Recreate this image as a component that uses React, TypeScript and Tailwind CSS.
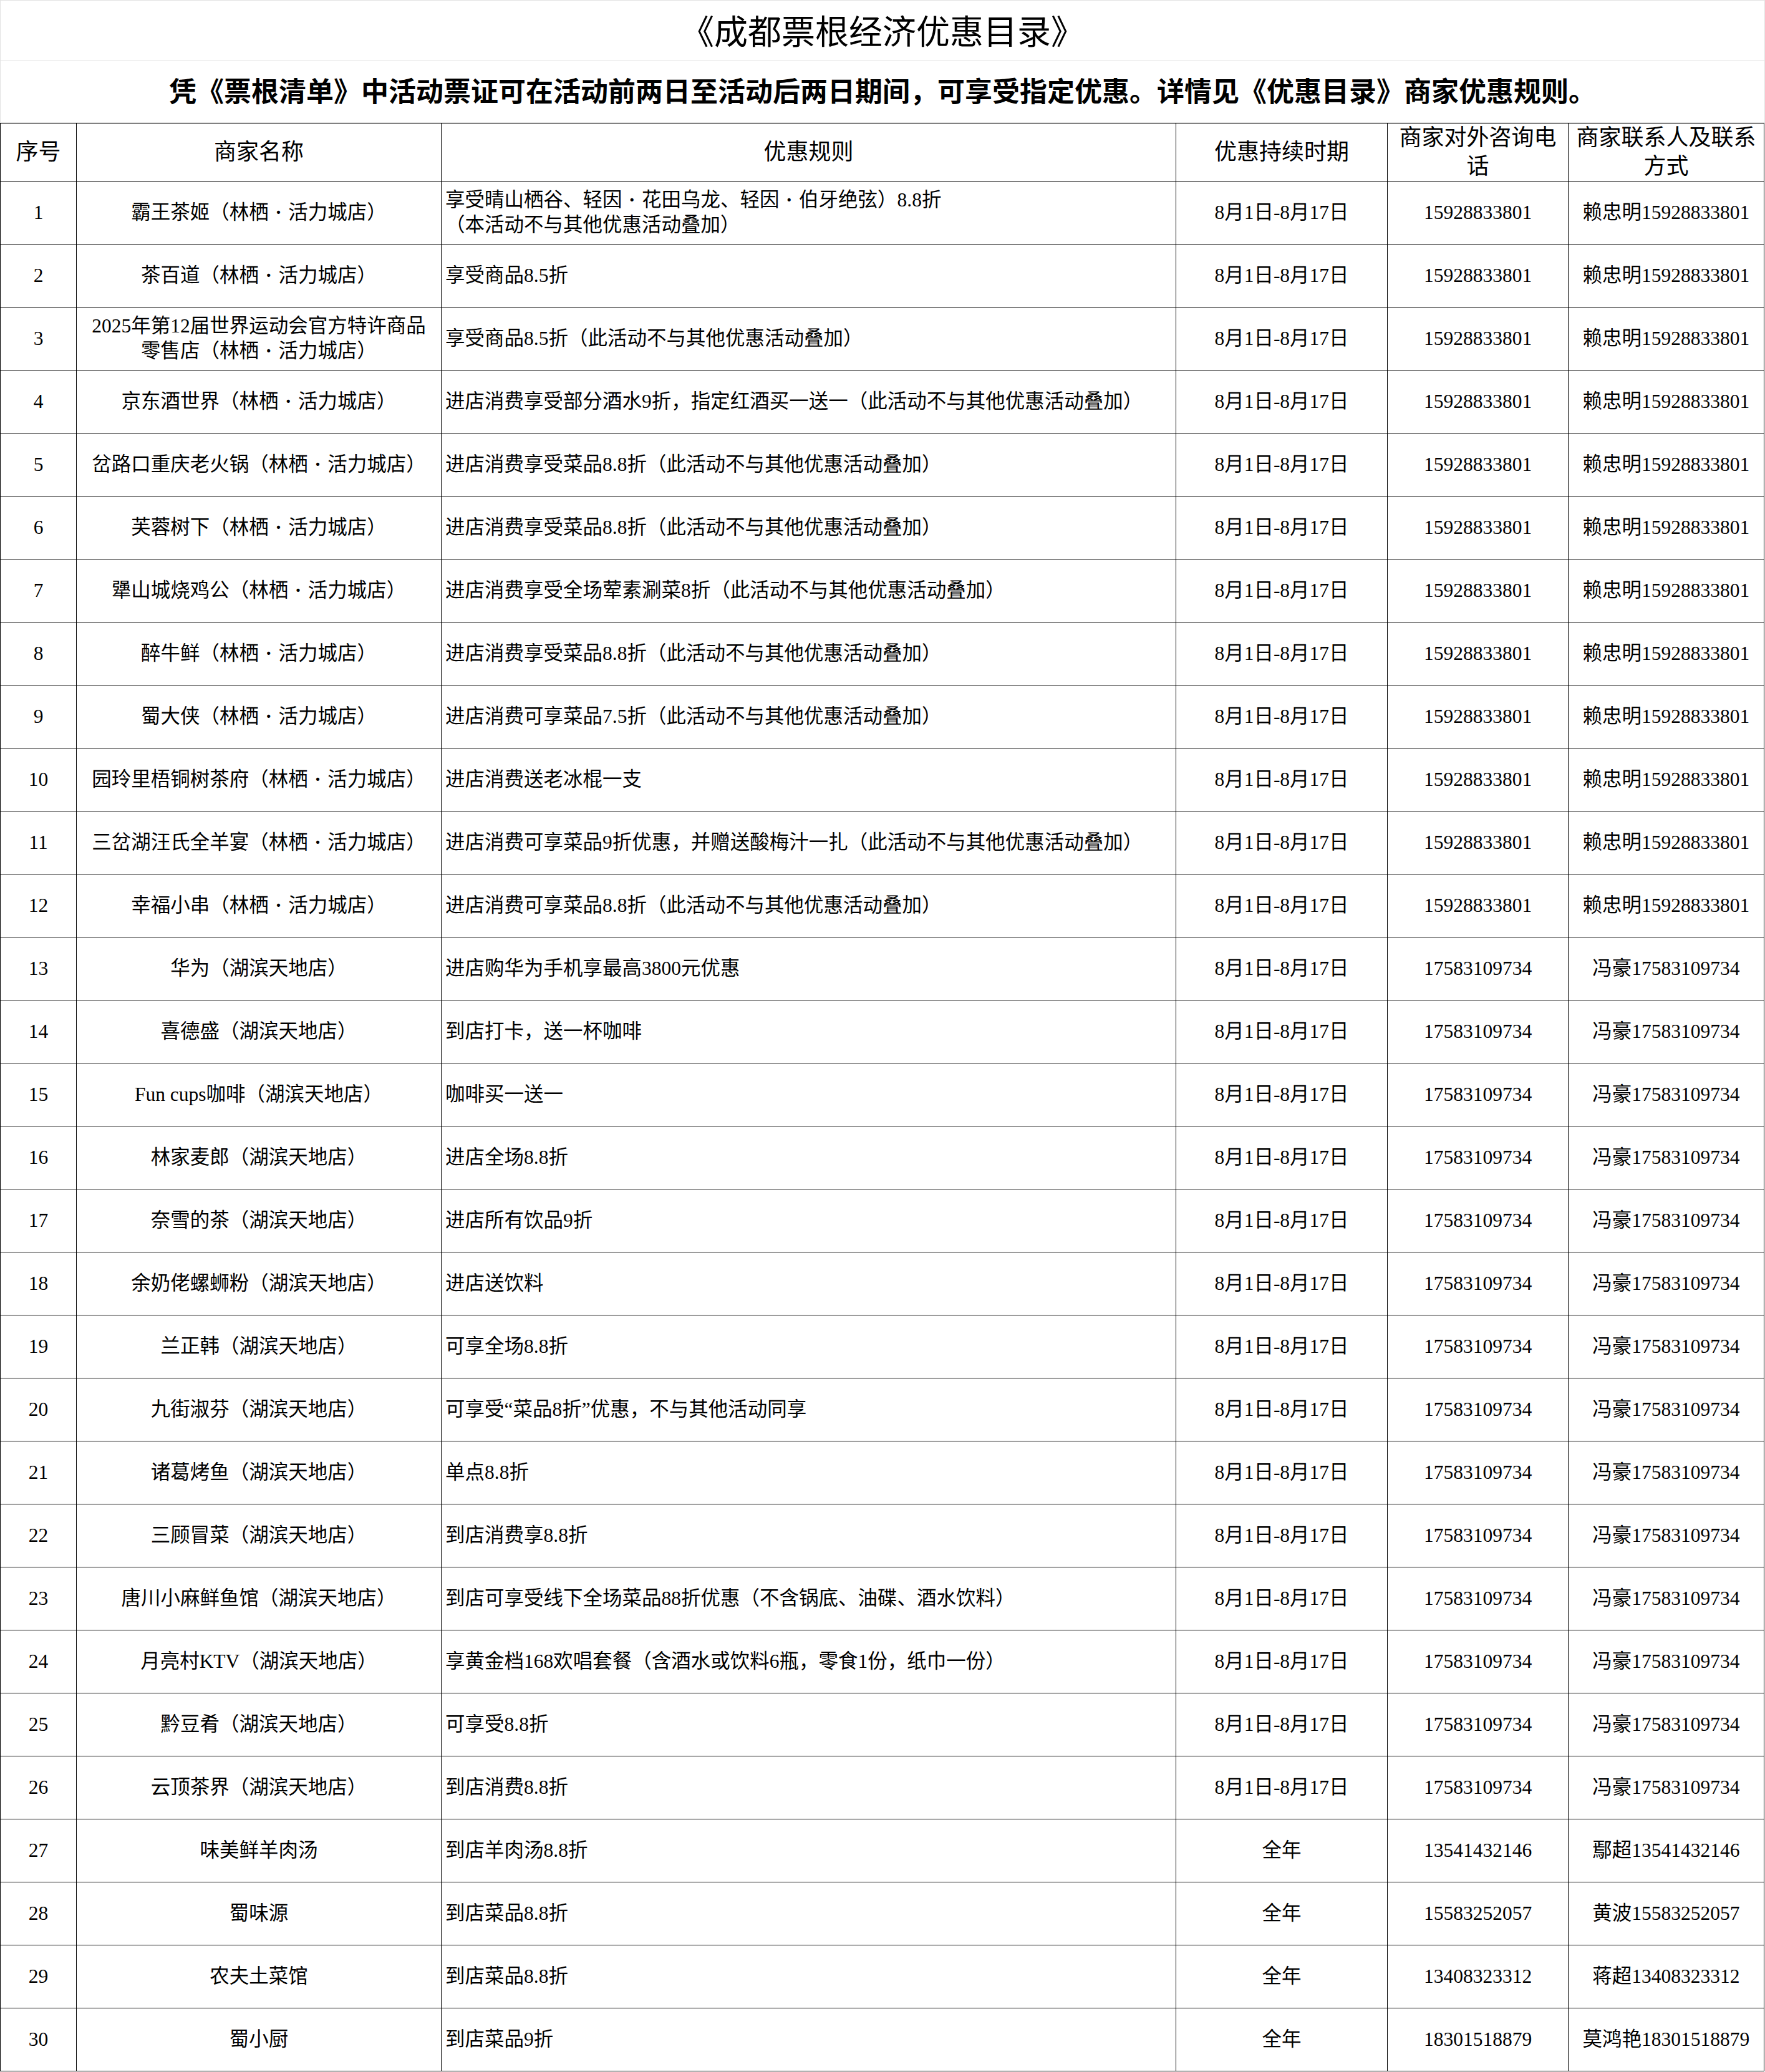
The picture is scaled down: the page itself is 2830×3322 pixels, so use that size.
import { Fragment } from "react"

type Row = {
  name: string[]
  rule: string[]
  period: string
  phone: string
  contact: string
}

const LINQI_PHONE = "15928833801"
const LINQI_CONTACT = "赖忠明15928833801"
const HUBIN_PHONE = "17583109734"
const HUBIN_CONTACT = "冯豪17583109734"
const AUG = "8月1日-8月17日"

const rows: Row[] = [
  { name: ["霸王茶姬（林栖·活力城店）"], rule: ["享受晴山栖谷、轻因·花田乌龙、轻因·伯牙绝弦）8.8折", "（本活动不与其他优惠活动叠加）"], period: AUG, phone: LINQI_PHONE, contact: LINQI_CONTACT },
  { name: ["茶百道（林栖·活力城店）"], rule: ["享受商品8.5折"], period: AUG, phone: LINQI_PHONE, contact: LINQI_CONTACT },
  { name: ["2025年第12届世界运动会官方特许商品", "零售店（林栖·活力城店）"], rule: ["享受商品8.5折（此活动不与其他优惠活动叠加）"], period: AUG, phone: LINQI_PHONE, contact: LINQI_CONTACT },
  { name: ["京东酒世界（林栖·活力城店）"], rule: ["进店消费享受部分酒水9折，指定红酒买一送一（此活动不与其他优惠活动叠加）"], period: AUG, phone: LINQI_PHONE, contact: LINQI_CONTACT },
  { name: ["岔路口重庆老火锅（林栖·活力城店）"], rule: ["进店消费享受菜品8.8折（此活动不与其他优惠活动叠加）"], period: AUG, phone: LINQI_PHONE, contact: LINQI_CONTACT },
  { name: ["芙蓉树下（林栖·活力城店）"], rule: ["进店消费享受菜品8.8折（此活动不与其他优惠活动叠加）"], period: AUG, phone: LINQI_PHONE, contact: LINQI_CONTACT },
  { name: ["犟山城烧鸡公（林栖·活力城店）"], rule: ["进店消费享受全场荤素涮菜8折（此活动不与其他优惠活动叠加）"], period: AUG, phone: LINQI_PHONE, contact: LINQI_CONTACT },
  { name: ["醉牛鲜（林栖·活力城店）"], rule: ["进店消费享受菜品8.8折（此活动不与其他优惠活动叠加）"], period: AUG, phone: LINQI_PHONE, contact: LINQI_CONTACT },
  { name: ["蜀大侠（林栖·活力城店）"], rule: ["进店消费可享菜品7.5折（此活动不与其他优惠活动叠加）"], period: AUG, phone: LINQI_PHONE, contact: LINQI_CONTACT },
  { name: ["园玲里梧铜树茶府（林栖·活力城店）"], rule: ["进店消费送老冰棍一支"], period: AUG, phone: LINQI_PHONE, contact: LINQI_CONTACT },
  { name: ["三岔湖汪氏全羊宴（林栖·活力城店）"], rule: ["进店消费可享菜品9折优惠，并赠送酸梅汁一扎（此活动不与其他优惠活动叠加）"], period: AUG, phone: LINQI_PHONE, contact: LINQI_CONTACT },
  { name: ["幸福小串（林栖·活力城店）"], rule: ["进店消费可享菜品8.8折（此活动不与其他优惠活动叠加）"], period: AUG, phone: LINQI_PHONE, contact: LINQI_CONTACT },
  { name: ["华为（湖滨天地店）"], rule: ["进店购华为手机享最高3800元优惠"], period: AUG, phone: HUBIN_PHONE, contact: HUBIN_CONTACT },
  { name: ["喜德盛（湖滨天地店）"], rule: ["到店打卡，送一杯咖啡"], period: AUG, phone: HUBIN_PHONE, contact: HUBIN_CONTACT },
  { name: ["Fun cups咖啡（湖滨天地店）"], rule: ["咖啡买一送一"], period: AUG, phone: HUBIN_PHONE, contact: HUBIN_CONTACT },
  { name: ["林家麦郎（湖滨天地店）"], rule: ["进店全场8.8折"], period: AUG, phone: HUBIN_PHONE, contact: HUBIN_CONTACT },
  { name: ["奈雪的茶（湖滨天地店）"], rule: ["进店所有饮品9折"], period: AUG, phone: HUBIN_PHONE, contact: HUBIN_CONTACT },
  { name: ["余奶佬螺蛳粉（湖滨天地店）"], rule: ["进店送饮料"], period: AUG, phone: HUBIN_PHONE, contact: HUBIN_CONTACT },
  { name: ["兰正韩（湖滨天地店）"], rule: ["可享全场8.8折"], period: AUG, phone: HUBIN_PHONE, contact: HUBIN_CONTACT },
  { name: ["九街淑芬（湖滨天地店）"], rule: ["可享受“菜品8折”优惠，不与其他活动同享"], period: AUG, phone: HUBIN_PHONE, contact: HUBIN_CONTACT },
  { name: ["诸葛烤鱼（湖滨天地店）"], rule: ["单点8.8折"], period: AUG, phone: HUBIN_PHONE, contact: HUBIN_CONTACT },
  { name: ["三顾冒菜（湖滨天地店）"], rule: ["到店消费享8.8折"], period: AUG, phone: HUBIN_PHONE, contact: HUBIN_CONTACT },
  { name: ["唐川小麻鲜鱼馆（湖滨天地店）"], rule: ["到店可享受线下全场菜品88折优惠（不含锅底、油碟、酒水饮料）"], period: AUG, phone: HUBIN_PHONE, contact: HUBIN_CONTACT },
  { name: ["月亮村KTV（湖滨天地店）"], rule: ["享黄金档168欢唱套餐（含酒水或饮料6瓶，零食1份，纸巾一份）"], period: AUG, phone: HUBIN_PHONE, contact: HUBIN_CONTACT },
  { name: ["黔豆肴（湖滨天地店）"], rule: ["可享受8.8折"], period: AUG, phone: HUBIN_PHONE, contact: HUBIN_CONTACT },
  { name: ["云顶茶界（湖滨天地店）"], rule: ["到店消费8.8折"], period: AUG, phone: HUBIN_PHONE, contact: HUBIN_CONTACT },
  { name: ["味美鲜羊肉汤"], rule: ["到店羊肉汤8.8折"], period: "全年", phone: "13541432146", contact: "鄢超13541432146" },
  { name: ["蜀味源"], rule: ["到店菜品8.8折"], period: "全年", phone: "15583252057", contact: "黄波15583252057" },
  { name: ["农夫土菜馆"], rule: ["到店菜品8.8折"], period: "全年", phone: "13408323312", contact: "蒋超13408323312" },
  { name: ["蜀小厨"], rule: ["到店菜品9折"], period: "全年", phone: "18301518879", contact: "莫鸿艳18301518879" },
]

// middle dot is full width (and heavy) in the source sheet
function Dot({ text }: { text: string }) {
  const parts = text.split("·")
  return (
    <>
      {parts.map((p, i) => (
        <Fragment key={i}>
          {i > 0 && <span className="inline-block w-[1em] text-center font-bold">·</span>}
          {p}
        </Fragment>
      ))}
    </>
  )
}

export default function App() {
  const th = "border border-black font-normal text-center text-[36px] leading-[46px] px-1 py-0"
  const td = "border border-black text-center text-[31.5px] leading-[40px] px-1 py-0"

  return (
    <div className="w-[2830px] bg-white text-black font-['Liberation_Serif','Noto_Sans_CJK_SC',serif]">
      <div className="h-[98px] border border-[#e2e2e2] flex items-center justify-center pt-[8px] text-[54px]">
        《成都票根经济优惠目录》
      </div>
      <div className="h-[99px] border-x border-b border-[#e2e2e2] flex items-center justify-center pt-[4px] text-[44px] font-bold">
        凭《票根清单》中活动票证可在活动前两日至活动后两日期间，可享受指定优惠。详情见《优惠目录》商家优惠规则。
      </div>

      <table className="w-[2829px] table-fixed border-collapse">
        <colgroup>
          <col className="w-[122px]" />
          <col className="w-[585px]" />
          <col className="w-[1178px]" />
          <col className="w-[339px]" />
          <col className="w-[290px]" />
          <col className="w-[314px]" />
        </colgroup>
        <thead>
          <tr className="h-[93px]">
            <th className={th}>序号</th>
            <th className={th}>商家名称</th>
            <th className={th}>优惠规则</th>
            <th className={th}>优惠持续时期</th>
            <th className={th}>商家对外咨询电话</th>
            <th className={th}>商家联系人及联系方式</th>
          </tr>
        </thead>
        <tbody>
          {rows.map((r, i) => (
            <tr key={i} className="h-[101px]">
              <td className={td}>{i + 1}</td>
              <td className={td}>
                {r.name.map((line, j) => (
                  <div key={j} className="whitespace-nowrap">
                    <Dot text={line} />
                  </div>
                ))}
              </td>
              <td className="border border-black text-left text-[31.5px] leading-[40px] pl-[6px] pr-1 py-0">
                {r.rule.map((line, j) => (
                  <div key={j}>
                    <Dot text={line} />
                  </div>
                ))}
              </td>
              <td className={td}>{r.period}</td>
              <td className={td}>{r.phone}</td>
              <td className={td}>{r.contact}</td>
            </tr>
          ))}
        </tbody>
      </table>
    </div>
  )
}
